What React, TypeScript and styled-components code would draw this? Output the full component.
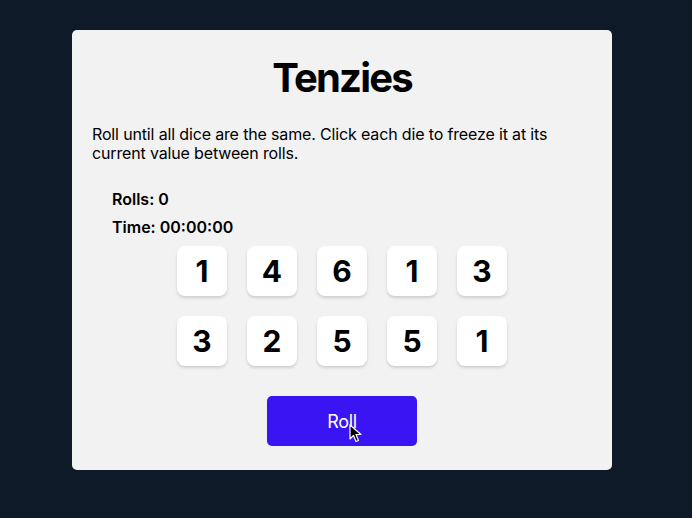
import React from "react";
import styled, { createGlobalStyle } from "styled-components";

const Global = createGlobalStyle`
  html, body { margin: 0; padding: 0; background: #0e1a27; }
  body { font-family: Inter, "Noto Sans", sans-serif; }
`;

const Page = styled.div`
  width: 692px;
  height: 518px;
  padding: 30px 0 0 72px;
  box-sizing: border-box;
  display: flex;
  align-items: flex-start;
`;

const Card = styled.main`
  position: relative;
  width: 540px;
  height: 440px;
  box-sizing: border-box;
  background: #f2f2f2;
  border-radius: 5px;
  padding: 20px 20px;
  display: flex;
  flex-direction: column;
`;

const Title = styled.h1`
  margin: 4px 0 0;
  text-align: center;
  font-size: 40px;
  font-weight: 700;
  letter-spacing: -1.8px;
  line-height: 48px;
  color: #000;
`;

const Intro = styled.p`
  margin: 23px 0 0;
  font-size: 16px;
  letter-spacing: -0.15px;
  line-height: 19px;
  color: #000;
`;

const Stats = styled.div`
  margin: 27px 0 0 20px;
  display: flex;
  flex-direction: column;
  gap: 9px;
`;

const Stat = styled.div`
  font-size: 16px;
  font-weight: 600;
  line-height: 19px;
  color: #000;
`;

const Grid = styled.div`
  margin: 9px auto 0;
  display: grid;
  grid-template-columns: repeat(5, 50px);
  grid-auto-rows: 50px;
  gap: 20px;
`;

const Die = styled.button`
  width: 50px;
  height: 50px;
  border: none;
  border-radius: 8px;
  background: #ffffff;
  box-shadow: 0 2px 3px rgba(0, 0, 0, 0.15);
  font-family: Inter, "Noto Sans", sans-serif;
  font-size: 30px;
  font-weight: 700;
  color: #000;
  display: flex;
  align-items: center;
  justify-content: center;
  padding: 0;
  cursor: pointer;
`;

const RollButton = styled.button`
  position: relative;
  margin: 30px auto 0;
  width: 150px;
  height: 50px;
  border: none;
  border-radius: 5px;
  background: #3b14f4;
  color: #fff;
  font-family: Inter, "Noto Sans", sans-serif;
  font-size: 18px;
  font-weight: 400;
  letter-spacing: -0.3px;
  cursor: pointer;
`;

const Cursor = styled.svg`
  position: absolute;
  left: 82px;
  top: 28px;
  width: 14px;
  height: 20px;
`;

const dice = [1, 4, 6, 1, 3, 3, 2, 5, 5, 1];

export default function App() {
  return (
    <>
      <Global />
      <Page>
        <Card>
          <Title>Tenzies</Title>
          <Intro>
            Roll until all dice are the same. Click each die to freeze it at its current value between rolls.
          </Intro>
          <Stats>
            <Stat>Rolls: 0</Stat>
            <Stat>Time: 00:00:00</Stat>
          </Stats>
          <Grid>
            {dice.map((d, i) => (
              <Die key={i}>{d}</Die>
            ))}
          </Grid>
          <RollButton>
            Roll
            <Cursor viewBox="0 0 14 20">
              <path d="M1 1 L1 15 L4.5 11.5 L7 17.5 L9.5 16.5 L7 10.5 L12 10.5 Z" fill="#000" stroke="#fff" strokeWidth="1.2" strokeLinejoin="round" />
            </Cursor>
          </RollButton>
        </Card>
      </Page>
    </>
  );
}
